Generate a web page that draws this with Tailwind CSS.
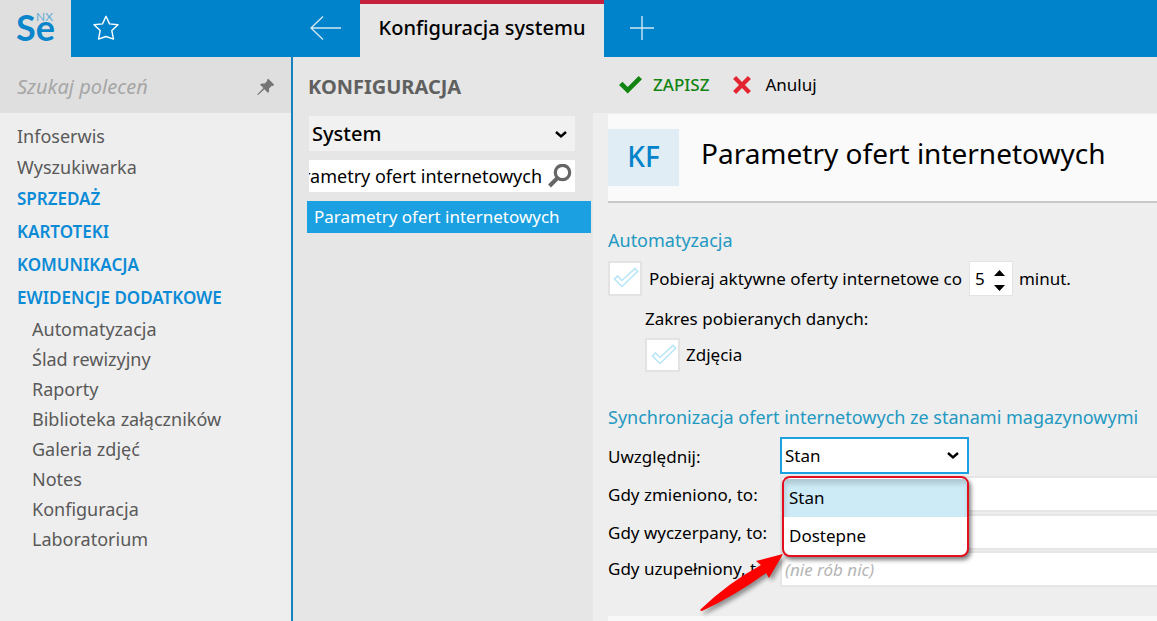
<!DOCTYPE html>
<html lang="pl">
<head>
<meta charset="utf-8">
<meta name="viewport" content="width=device-width, initial-scale=1">
<title>Konfiguracja systemu</title>
<script src="https://cdn.jsdelivr.net/npm/@tailwindcss/browser@4"></script>
</head>
<body class="flex h-screen flex-col overflow-hidden bg-[#eeeeee] font-['Noto_Sans','Open_Sans',sans-serif] text-[17px] leading-6 text-black">

<header class="flex h-[57px] shrink-0 bg-[#0083ca]">
  <div class="flex w-[360px] shrink-0 items-stretch">
    <a href="#" aria-label="Se NX" class="relative w-[71px] bg-[#dfdfdf] pl-4 font-['Lato',sans-serif] text-[36px] leading-[54px] font-bold text-[#0b86cb]">Se<span class="absolute top-[10px] left-9 text-[12px] leading-[14px] font-normal text-[#63acd6]">NX</span></a>
    <button type="button" aria-label="Ulubione" class="flex w-[70px] items-center justify-center pb-px">
      <svg class="size-7" viewBox="0 0 28 28" fill="none" stroke="#fff" stroke-width="1.4" stroke-linejoin="round"><path d="M14 2.300l3.500 7.600 8.500.9-6.200 5.800 1.700 8.500-7.500-2.600-7.500 2.600 1.700-8.500L2 10.800l8.500-.9z"/></svg>
    </button>
    <button type="button" aria-label="Wstecz" class="ml-auto flex w-[68px] items-center justify-center pb-px">
      <svg class="h-6 w-8" viewBox="0 0 32 24" fill="none" stroke="#cfe6f4" stroke-width="1.400"><path d="M31 12H1M13 .5L1 12l12 11.500"/></svg>
    </button>
  </div>
  <button type="button" class="w-[244px] shrink-0 border-t-4 border-[#c4213f] bg-[#e6e6e6] pb-[6px] text-[20px] font-medium">Konfiguracja systemu</button>
  <button type="button" aria-label="Nowa karta" class="flex w-[75px] items-center justify-center pb-px">
    <svg class="size-6" viewBox="0 0 24 24" stroke="#cfe6f4" stroke-width="1.400"><path d="M12 0v24M0 12h24"/></svg>
  </button>
</header>

<div class="flex min-h-0 flex-1">
  <aside class="w-[293px] shrink-0 border-r-2 border-[#1583bf]">
    <div class="flex h-14 items-center bg-[#dfdfdf] pt-1 pr-4 pl-[17px]">
      <input type="text" aria-label="Szukaj poleceń" placeholder="Szukaj poleceń" class="min-w-0 flex-1 text-[20px] italic outline-none placeholder:text-[#a6a6a6]">
      <button type="button" aria-label="Przypnij">
        <svg class="size-[18px]" viewBox="0 0 18 18" fill="#757575"><path d="M11.200.8l6 6-1.300 1.300-1.100-.3-2.900 3c.5 1.700.2 3-.8 4.100L7.400 11.200 1 17H.4v-.7l6-6.300L3 6.500c1-.9 2.500-1.200 4.300-.7l2.900-2.800-.3-1z"/></svg>
      </button>
    </div>
    <nav class="pt-2 pl-[17px] text-[18px] text-[#595959]">
      <ul>
        <li class="h-[31px] leading-[31px]"><a href="#">Infoserwis</a></li>
        <li class="h-[31px] leading-[31px]"><a href="#">Wyszukiwarka</a></li>
        <li class="h-[33px] text-[17px] leading-[32px] font-semibold text-[#0b8bd6]"><a href="#">SPRZEDAŻ</a></li>
        <li class="h-[33px] text-[17px] leading-[32px] font-semibold text-[#0b8bd6]"><a href="#">KARTOTEKI</a></li>
        <li class="h-[33px] text-[17px] leading-[32px] font-semibold text-[#0b8bd6]"><a href="#">KOMUNIKACJA</a></li>
        <li class="text-[17px] leading-[32px] font-semibold text-[#0b8bd6]"><a href="#">EWIDENCJE DODATKOWE</a>
          <ul class="pl-[15px] text-[18px] leading-[30px] font-normal text-[#595959]">
            <li><a href="#">Automatyzacja</a></li>
            <li><a href="#">Ślad rewizyjny</a></li>
            <li><a href="#">Raporty</a></li>
            <li><a href="#">Biblioteka załączników</a></li>
            <li><a href="#">Galeria zdjęć</a></li>
            <li><a href="#">Notes</a></li>
            <li><a href="#">Konfiguracja</a></li>
            <li><a href="#">Laboratorium</a></li>
          </ul>
        </li>
      </ul>
    </nav>
  </aside>

  <section class="w-[300px] shrink-0 bg-[#e6e6e6] pt-[15px] pl-[14px]">
    <h2 class="pl-px text-[20px] leading-[30px] font-bold text-[#606060]">KONFIGURACJA</h2>
    <div class="relative mt-[14px] mr-[18px] ml-[2px]">
      <select aria-label="Obszar konfiguracji" class="block h-[35px] w-full appearance-none bg-[#f1f1f1] pl-[3px] text-[20px] font-medium outline-none"><option>System</option></select>
      <svg class="pointer-events-none absolute top-[14px] right-2 h-[10px] w-3" viewBox="0 0 12 10" fill="none" stroke="#000" stroke-width="2.400"><path d="M1 2l5 4.500L11 2"/></svg>
    </div>
    <div class="mt-[9px] mr-[18px] ml-[2px] flex h-8 items-center bg-white">
      <input type="text" aria-label="Filtr" value="Parametry ofert internetowych" class="h-8 w-[236px] min-w-0 -indent-[27px] text-[18px] outline-none">
      <button type="button" aria-label="Szukaj" class="ml-auto pr-[3px]">
        <svg class="size-6" viewBox="0 0 24 24" fill="none" stroke="#666"><circle cx="14.500" cy="8.500" r="7.200" stroke-width="3.200"/><path d="M9 14.500L1.500 22" stroke-width="4"/></svg>
      </button>
    </div>
    <a href="#" class="mt-[9px] mr-[2px] block h-8 bg-[#1ba0e2] pl-[7px] text-[17px] leading-8 text-white">Parametry ofert internetowych</a>
  </section>

  <main class="min-w-0 flex-1 overflow-hidden">
    <div class="flex h-14 items-center bg-[#e6e6e6] pl-[26px]">
      <button type="button" class="flex items-center gap-[11px] font-medium text-[#128412]">
        <svg class="h-[18px] w-[23px]" viewBox="0 0 23 18"><path d="M0 9l3.500-3.300 5.200 5.200L19.700 0 23 3.300 8.700 17.500z" fill="#128412"/></svg>
        ZAPISZ
      </button>
      <button type="button" class="ml-6 flex items-center gap-[14px]">
        <svg class="size-[18px]" viewBox="0 0 18 18" stroke="#e32531" stroke-width="4.300"><path d="M1.600 1.600l14.800 14.800M16.400 1.600L1.600 16.400"/></svg>
        Anuluj
      </button>
    </div>
    <div class="pt-px pl-[15px]">
      <div class="flex h-[89px] items-center border-b-2 border-[#c6c9c8] bg-[#fafafa]">
        <div class="flex h-[57px] w-[71px] items-center justify-center bg-[#e0edf5] pb-1 text-[28px] font-medium text-[#0083ca]">KF</div>
        <h1 class="pb-[10px] pl-[22px] text-[28px] leading-9 whitespace-nowrap">Parametry ofert internetowych</h1>
      </div>

      <h2 class="mt-[23px] text-[18px] leading-7 text-[#2399c2]">Automatyzacja</h2>
      <div class="mt-[7px] flex h-[35px] items-center whitespace-nowrap">
        <label class="flex items-center gap-[7px]">
          <span class="relative flex">
            <input type="checkbox" checked class="h-[35px] w-[34px] appearance-none border-2 border-[#e3e3e3] bg-white">
            <svg class="pointer-events-none absolute top-[6px] left-[5px] h-[21px] w-[26px]" viewBox="0 0 26 21" fill="none" stroke="#b9e6f7" stroke-width="1.600"><path d="M1.500 12l3-3 4.500 4.500L22 1.500l2.500 3L9 19.500z"/></svg>
          </span>
          Pobieraj aktywne oferty internetowe co
        </label>
        <div class="relative ml-[7px]">
          <input type="text" inputmode="numeric" aria-label="Liczba minut" value="5" class="block h-[35px] w-11 border border-[#e3e3e3] bg-white pl-[5px] outline-none">
          <svg class="pointer-events-none absolute top-[9px] right-2 h-[21px] w-[11px]" viewBox="0 0 11 21"><path d="M0 6L5.500 0 11 6zM0 15l5.500 6L11 15z"/></svg>
        </div>
        <span class="ml-[6px]">minut.</span>
      </div>
      <p class="mt-[11px] ml-[37px]">Zakres pobieranych danych:</p>
      <label class="mt-[7px] ml-[37px] flex w-max items-center gap-[6px]">
        <span class="relative flex">
          <input type="checkbox" checked class="h-[34px] w-[35px] appearance-none border-2 border-[#e3e3e3] bg-white">
          <svg class="pointer-events-none absolute top-[6px] left-[6px] h-[21px] w-[26px]" viewBox="0 0 26 21" fill="none" stroke="#b9e6f7" stroke-width="1.600"><path d="M1.500 12l3-3 4.500 4.500L22 1.500l2.500 3L9 19.500z"/></svg>
        </span>
        Zdjęcia
      </label>

      <h2 class="mt-[31px] text-[18px] leading-7 whitespace-nowrap text-[#2399c2]">Synchronizacja ofert internetowych ze stanami magazynowymi</h2>
      <div class="relative mt-[6px] grid grid-cols-[172px_1fr] items-center whitespace-nowrap">
        <label for="stan">Uwzględnij:</label>
        <div class="relative mb-[2px] w-[189px]">
          <select id="stan" class="block h-[37px] w-full appearance-none border-2 border-[#1ba0e2] bg-white pl-[3px] outline-none"><option>Stan</option><option>Dostepne</option></select>
          <svg class="pointer-events-none absolute top-[14px] right-[10px] h-[10px] w-3" viewBox="0 0 12 10" fill="none" stroke="#000" stroke-width="2.400"><path d="M1 2l5 4.500L11 2"/></svg>
        </div>
        <label for="zmieniono">Gdy zmieniono, to:</label>
        <input id="zmieniono" type="text" class="mb-[2px] h-9 border-2 border-r-0 border-[#e6e6e6] bg-white pl-1 outline-none">
        <label for="wyczerpany">Gdy wyczerpany, to:</label>
        <input id="wyczerpany" type="text" class="mb-px h-9 border-2 border-r-0 border-[#e6e6e6] bg-white pl-1 outline-none">
        <label for="uzupelniony">Gdy uzupełniony, to:</label>
        <input id="uzupelniony" type="text" placeholder="(nie rób nic)" class="h-9 border-2 border-r-0 border-[#e6e6e6] bg-white pl-[3px] outline-none placeholder:text-[#b5b5b5] placeholder:italic">

        <ul role="listbox" aria-label="Uwzględnij" class="absolute top-[39px] left-[174px] w-[187px] overflow-hidden rounded-lg border-2 border-[#e30f1f] bg-white pt-px shadow-[2px_3px_4px_rgba(0,0,0,0.5)]">
          <li role="option" aria-selected="true" class="bg-[#cdebf7] pl-[5px] leading-[38px] shadow-[inset_1px_5px_5px_rgba(0,0,0,0.15)]">Stan</li>
          <li role="option" aria-selected="false" class="pl-[5px] leading-[38px]">Dostepne</li>
        </ul>
        <svg class="absolute top-[116px] left-[90px] h-[60px] w-[90px] drop-shadow-[3px_3px_2px_rgba(0,0,0,0.4)]" viewBox="0 0 90 60"><path d="M85 1L58 8l5 4Q30 30 3 56q-2 2 1 2Q38 42 68 20l3 5z" fill="#fe0000"/></svg>
      </div>
      <div class="mt-[29px] h-10 bg-[#f8f8f8]"></div>
    </div>
  </main>
</div>
</body>
</html>
